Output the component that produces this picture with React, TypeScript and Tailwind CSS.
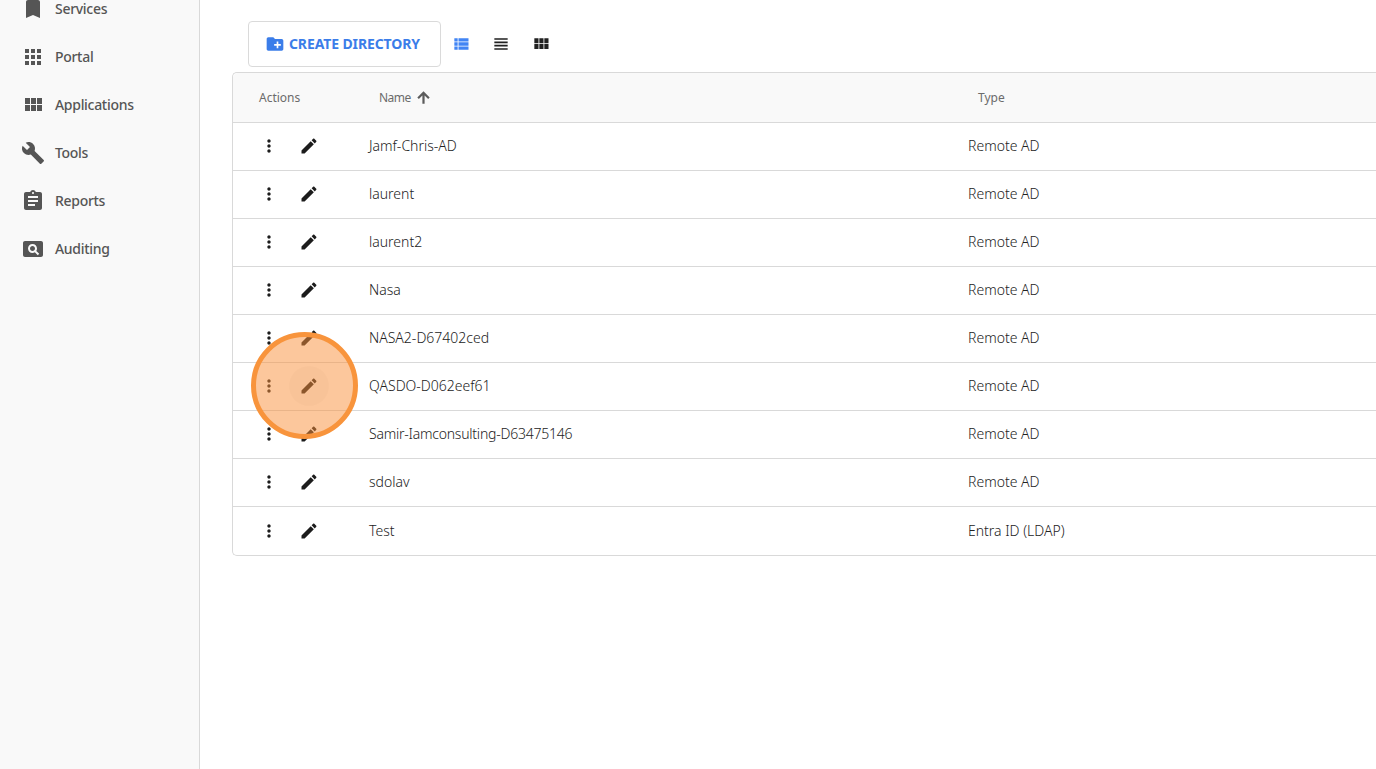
import type { ReactNode } from "react";

const icons = {
  bookmark: "M17 3H7c-1.1 0-2 .9-2 2v16l7-3 7 3V5c0-1.1-.9-2-2-2z",
  apps: "M4 8h4V4H4v4zm6 12h4v-4h-4v4zm-6 0h4v-4H4v4zm0-6h4v-4H4v4zm6 0h4v-4h-4v4zm6-10v4h4V4h-4zm-6 4h4V4h-4v4zm6 6h4v-4h-4v4zm0 6h4v-4h-4v4z",
  module:
    "M4 11h5V5H4v6zm0 7h5v-6H4v6zm6 0h5v-6h-5v6zm6 0h5v-6h-5v6zm-6-7h5V5h-5v6zm6-6v6h5V5h-5z",
  build:
    "M22.7 19l-9.1-9.1c.9-2.3.4-5-1.5-6.9-2-2-5-2.4-7.4-1.3L9 6 6 9 1.6 4.7C.4 7.1.9 10.1 2.9 12.1c1.9 1.9 4.6 2.4 6.9 1.5l9.1 9.1c.4.4 1 .4 1.4 0l2.3-2.3c.5-.4.5-1.1.1-1.4z",
  assignment:
    "M19 3h-4.18C14.4 1.84 13.3 1 12 1c-1.3 0-2.4.84-2.82 2H5c-1.1 0-2 .9-2 2v14c0 1.1.9 2 2 2h14c1.1 0 2-.9 2-2V5c0-1.1-.9-2-2-2zm-7 0c.55 0 1 .45 1 1s-.45 1-1 1-1-.45-1-1 .45-1 1-1zm2 14H7v-2h7v2zm3-4H7v-2h10v2zm0-4H7V7h10v2z",
  pageview:
    "M11.5 9C10.12 9 9 10.12 9 11.5s1.12 2.5 2.5 2.5 2.5-1.12 2.5-2.5S12.88 9 11.5 9zM20 4H4c-1.1 0-2 .9-2 2v12c0 1.1.9 2 2 2h16c1.1 0 2-.9 2-2V6c0-1.1-.9-2-2-2zm-3.21 14.21l-2.91-2.91c-.69.44-1.51.7-2.39.7C9.01 16 7 13.99 7 11.5S9.01 7 11.5 7 16 9.01 16 11.5c0 .88-.26 1.69-.7 2.39l2.91 2.9-1.42 1.42z",
  newFolder:
    "M20 6h-8l-2-2H4c-1.11 0-1.99.89-1.99 2L2 18c0 1.11.89 2 2 2h16c1.11 0 2-.89 2-2V8c0-1.11-.89-2-2-2zm-1 8h-3v3h-2v-3h-3v-2h3V9h2v3h3v2z",
  list: "M4 14h4v-4H4v4zm0 5h4v-4H4v4zM4 9h4V5H4v4zm5 5h12v-4H9v4zm0 5h12v-4H9v4zM9 5v4h12V5H9z",
  headline:
    "M4 15h16v-2H4v2zm0 4h16v-2H4v2zm0-8h16V9H4v2zm0-6v2h16V5H4z",
  more: "M12 8c1.1 0 2-.9 2-2s-.9-2-2-2-2 .9-2 2 .9 2 2 2zm0 2c-1.1 0-2 .9-2 2s.9 2 2 2 2-.9 2-2-.9-2-2-2zm0 6c-1.1 0-2 .9-2 2s.9 2 2 2 2-.9 2-2-.9-2-2-2z",
  edit: "M3 17.25V21h3.75L17.81 9.94l-3.75-3.75L3 17.25zM20.71 7.04c.39-.39.39-1.02 0-1.41l-2.34-2.34c-.39-.39-1.02-.39-1.41 0l-1.83 1.83 3.75 3.75 1.83-1.83z",
  arrowUp:
    "M4.2 12l1.9 1.9 4.5-4.5V20h2.8V9.4l4.5 4.5 1.9-1.9L12 4.2 4.2 12z",
};

type IconName = keyof typeof icons;

const Icon = ({ name, size = 20 }: { name: IconName; size?: number }) => (
  <svg
    width={size}
    height={size}
    viewBox="0 0 24 24"
    fill="currentColor"
    className="shrink-0"
  >
    <path d={icons[name]} />
  </svg>
);

const navItems: { label: string; icon: IconName }[] = [
  { label: "Services", icon: "bookmark" },
  { label: "Portal", icon: "apps" },
  { label: "Applications", icon: "module" },
  { label: "Tools", icon: "build" },
  { label: "Reports", icon: "assignment" },
  { label: "Auditing", icon: "pageview" },
];

const directories = [
  { name: "Jamf-Chris-AD", type: "Remote AD" },
  { name: "laurent", type: "Remote AD" },
  { name: "laurent2", type: "Remote AD" },
  { name: "Nasa", type: "Remote AD" },
  { name: "NASA2-D67402ced", type: "Remote AD" },
  { name: "QASDO-D062eef61", type: "Remote AD", active: true },
  { name: "Samir-Iamconsulting-D63475146", type: "Remote AD" },
  { name: "sdolav", type: "Remote AD" },
  { name: "Test", type: "Entra ID (LDAP)" },
];

const IconButton = ({ children }: { children: ReactNode }) => (
  <button className="flex size-10 items-center justify-center rounded-full">
    {children}
  </button>
);

const Sidebar = () => (
  <nav className="h-full w-[200px] shrink-0 overflow-hidden border-r border-[#d9d9d9] bg-[#f9f9f9]">
    <ul className="-mt-[15px]">
      {navItems.map((item) => (
        <li
          key={item.label}
          className="flex h-12 items-center gap-[10px] pl-[21px] text-sm font-medium tracking-[-0.3px] text-[#555]"
        >
          <Icon name={item.icon} size={24} />
          <span>{item.label}</span>
        </li>
      ))}
    </ul>
  </nav>
);

const Toolbar = () => (
  <div className="flex h-[46px] items-center pl-4">
    <button className="flex h-[46px] w-[193px] items-center gap-1 rounded border border-[#dadada] pl-4 text-sm font-bold tracking-[-0.12px] text-[#3b7de9]">
      <Icon name="newFolder" />
      <span className="whitespace-nowrap">CREATE DIRECTORY</span>
    </button>
    <div className="flex text-[#212121]">
      <IconButton>
        <span className="text-[#4285f4]">
          <Icon name="list" />
        </span>
      </IconButton>
      <IconButton>
        <Icon name="headline" />
      </IconButton>
      <IconButton>
        <Icon name="module" />
      </IconButton>
    </div>
  </div>
);

const DirectoryTable = () => (
  <div className="mt-[5px] rounded-l-[5px] border border-r-0 border-[#d9d9d9]">
    <div className="flex h-[50px] items-center rounded-tl-[5px] border-b border-[#d9d9d9] bg-[#f9f9f9] text-xs text-[#6b6b6b]">
      <div className="w-[120px] pl-[26px]">Actions</div>
      <div className="flex w-[599px] items-center gap-[3px] pl-[26px]">
        <span className="tracking-[-0.5px]">Name</span>
        <span className="pb-px text-[#5c5c5c]">
          <Icon name="arrowUp" size={19} />
        </span>
      </div>
      <div className="pl-[26px]">Type</div>
    </div>
    {directories.map((dir) => (
      <div
        key={dir.name}
        className="flex h-12 items-center border-b border-[#d9d9d9] pb-px text-sm font-light text-[#222] last:border-b-0 last:pb-0"
      >
        <div className="flex w-[136px] pl-4 text-[#1c1c1c]">
          <IconButton>
            <Icon name="more" />
          </IconButton>
          <div className="relative">
            <div
              className={
                dir.active ? "rounded-full bg-black/[0.03]" : "rounded-full"
              }
            >
              <IconButton>
                <Icon name="edit" />
              </IconButton>
            </div>
            {dir.active && (
              <div className="absolute -top-[34px] -left-[38px] z-10 size-[107px] rounded-full border-[5px] border-[#f8943c] bg-[#f98f3a]/50" />
            )}
          </div>
        </div>
        <div
          className={
            dir.name.length > 20 ? "w-[599px] tracking-[-0.23px]" : "w-[599px]"
          }
        >
          {dir.name}
        </div>
        <div>{dir.type}</div>
      </div>
    ))}
  </div>
);

export default function App() {
  return (
    <div className="flex h-screen w-full overflow-hidden bg-white font-['Noto_Sans','Open_Sans',sans-serif]">
      <Sidebar />
      <main className="min-w-0 flex-1 pt-[21px] pl-8">
        <Toolbar />
        <DirectoryTable />
      </main>
    </div>
  );
}
